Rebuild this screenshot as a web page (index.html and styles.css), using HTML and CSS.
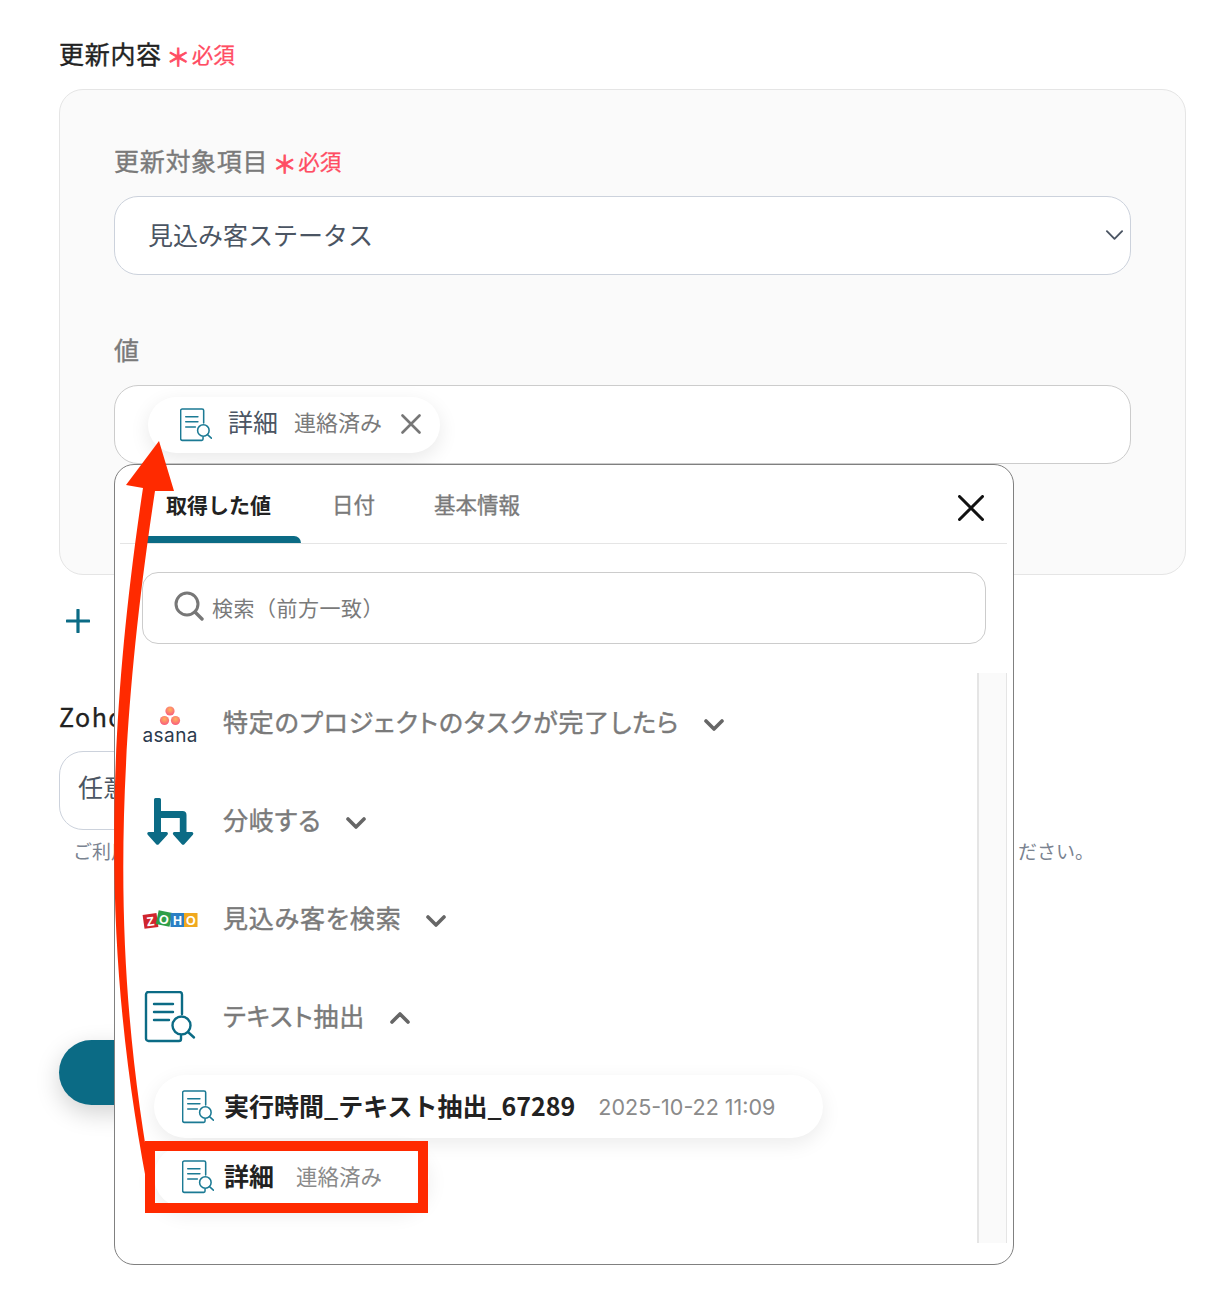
FILE: index.html
```html
<!DOCTYPE html>
<html lang="ja">
<head>
<meta charset="utf-8">
<title>更新内容</title>
<link rel="stylesheet" href="styles.css">
</head>
<body>
<svg class="defs" width="0" height="0" aria-hidden="true">
  <symbol id="doc" viewBox="0 0 50 52">
    <g fill="none" stroke="currentColor" stroke-width="2.4" stroke-linecap="round">
      <path d="M37 23V3.500a2.500 2.500 0 0 0-2.500-2.500H3.500A2.500 2.500 0 0 0 1 3.500v44A2.500 2.500 0 0 0 3.500 50H34a2 2 0 0 0 2-2v-3"/>
      <path d="M9 13h19M9 21h19M9 29h15"/>
      <circle cx="36.500" cy="34.500" r="9"/>
      <path d="M43 41l6 5.500"/>
    </g>
  </symbol>
  <symbol id="chev" viewBox="0 0 20 12">
    <path d="M2 2l8 8 8-8" fill="none" stroke="currentColor" stroke-width="3.600" stroke-linecap="round" stroke-linejoin="round"/>
  </symbol>
</svg>

<div class="page">
  <div class="label dark"><span class="label-text">更新内容</span><span class="req"><span class="ast">＊</span>必須</span></div>
  <section class="panel">
    <div class="label muted"><span class="label-text">更新対象項目</span><span class="req"><span class="ast">＊</span>必須</span></div>
    <div class="field select"><span class="field-text">見込み客ステータス</span>
      <svg class="select-chev" viewBox="0 0 20 12"><path d="M2 2l8 8 8-8" fill="none" stroke="currentColor" stroke-width="2" stroke-linecap="round" stroke-linejoin="round"/></svg>
    </div>
    <div class="label muted gap-label"><span class="label-text">値</span></div>
    <div class="field value">
      <div class="chip">
        <svg class="doc-sm"><use href="#doc"/></svg>
        <span class="chip-name">詳細</span>
        <span class="chip-val">連絡済み</span>
        <svg class="chip-x" viewBox="0 0 20 20"><path d="M1.500 1.500l17 17M18.500 1.500l-17 17" fill="none" stroke="currentColor" stroke-width="2.600" stroke-linecap="round"/></svg>
      </div>
    </div>
  </section>
  <svg class="plus" viewBox="0 0 24 24"><path d="M12 1v22M1 12h22" fill="none" stroke="currentColor" stroke-width="3.200" stroke-linecap="round"/></svg>
  <div class="label dark zoho-label"><span>Zoho</span></div>
  <div class="field short"><span class="field-text">任意の値</span></div>
  <div class="help"><span>ご利用の環境に対応するドメインを</span><span>選択してください。</span></div>
  <div class="primary">テスト</div>

  <div class="popover">
    <div class="tabs">
      <div class="tab active">取得した値</div>
      <div class="tab">日付</div>
      <div class="tab">基本情報</div>
      <svg class="close" viewBox="0 0 26 26"><path d="M1.500 1.500l23 23M24.500 1.500l-23 23" fill="none" stroke="currentColor" stroke-width="3" stroke-linecap="round"/></svg>
    </div>
    <div class="search">
      <svg class="search-ic" viewBox="0 0 30 30"><circle cx="13" cy="13" r="11" fill="none" stroke="currentColor" stroke-width="3"/><path d="M21 21l7 7" stroke="currentColor" stroke-width="3.400" stroke-linecap="round"/></svg>
      <span class="search-text">検索（前方一致）</span>
    </div>
    <div class="body">
      <div class="list">
        <div class="row">
          <svg class="logo" viewBox="0 0 56 56">
            <defs><radialGradient id="as" cx="50%" cy="35%" r="65%"><stop offset="0" stop-color="#ffb35a"/><stop offset="1" stop-color="#f9597f"/></radialGradient></defs>
            <circle cx="28" cy="16" r="4.600" fill="url(#as)"/>
            <circle cx="22.500" cy="25.500" r="4.600" fill="url(#as)"/>
            <circle cx="33.500" cy="25.500" r="4.600" fill="url(#as)"/>
            <text class="asana" x="0.500" y="47" textLength="55" lengthAdjust="spacing">asana</text>
          </svg>
          <span class="row-title">特定のプロジェクトのタスクが完了したら</span>
          <svg class="row-chev"><use href="#chev"/></svg>
        </div>
        <div class="row">
          <svg class="logo" viewBox="0 -1 56 50">
            <path fill="#0b6b85" d="M12 2.500a1.500 1.500 0 0 1 1.500-1.500h4A1.500 1.500 0 0 1 19 2.500V14h21.500a4 4 0 0 1 4 4v17h5.200c1.500 0 2.200 1.600 1.200 2.700L42.600 47a2 2 0 0 1-3 0l-8.300-9.300c-1-1.100-.3-2.700 1.200-2.700h5.300V21H19v14h5.300c1.500 0 2.200 1.600 1.200 2.700L17 47a2 2 0 0 1-3 0l-8.300-9.300C4.700 36.600 5.400 35 6.900 35H12z"/>
          </svg>
          <span class="row-title">分岐する</span>
          <svg class="row-chev"><use href="#chev"/></svg>
        </div>
        <div class="row">
          <svg class="logo" viewBox="0 -1 56 20">
            <g class="zoho">
              <rect x="1.500" y="4" width="14" height="14" fill="#d0252e" transform="rotate(-8 8 11)"/>
              <rect x="15" y="1.500" width="14" height="14" fill="#2f9e48" transform="rotate(12 22 9)"/>
              <rect x="28.500" y="3" width="14" height="14" fill="#2b7fc4"/>
              <rect x="42" y="3" width="13.500" height="14" fill="#f0a81e"/>
              <text x="8.500" y="15.800" transform="rotate(-8 8 11)">Z</text>
              <text x="22" y="13.800" transform="rotate(12 22 9)">O</text>
              <text x="35.500" y="15">H</text>
              <text x="48.800" y="15">O</text>
            </g>
          </svg>
          <span class="row-title">見込み客を検索</span>
          <svg class="row-chev"><use href="#chev"/></svg>
        </div>
        <div class="row">
          <svg class="logo doc-lg"><use href="#doc"/></svg>
          <span class="row-title">テキスト抽出</span>
          <svg class="row-chev up"><use href="#chev"/></svg>
        </div>
        <div class="pill">
          <svg class="doc-sm"><use href="#doc"/></svg>
          <span class="pill-name">実行時間_テキスト抽出_67289</span>
          <span class="pill-val num">2025-10-22 11:09</span>
        </div>
        <div class="pill">
          <svg class="doc-sm"><use href="#doc"/></svg>
          <span class="pill-name">詳細</span>
          <span class="pill-val">連絡済み</span>
        </div>
      </div>
      <div class="track"></div>
    </div>
  </div>

  <div class="mark"></div>
  <svg class="arrow" viewBox="0 0 1224 1306">
    <path fill="#ff2a00" d="M151 1205C112 1010 96 800 143 488L126 485L159 441L174 491L155 491C108 800 118 1000 154 1195Z"/>
  </svg>
</div>
</body>
</html>
```
FILE: styles.css
```css
* { box-sizing: border-box; }
html, body { margin: 0; background: #fff; }
body { font-family: "Noto Sans CJK JP", "Noto Sans", sans-serif; }
.defs { position: absolute; }

.page {
  position: relative;
  width: 1224px;
  height: 1306px;
  padding: 37px 38px 0 59px;
  overflow: hidden;
}

.label {
  display: flex;
  align-items: center;
  height: 36px;
  font-size: 25px;
  letter-spacing: .7px;
  white-space: nowrap;
}
.label-text { margin-top: -4px; -webkit-text-stroke: .4px currentColor; }
.dark { color: #222; }
.muted { color: #7a7a7a; }
.req {
  display: inline-flex;
  align-items: center;
  margin-left: 3px;
  margin-top: -4px;
  color: #ff4d63;
  font-size: 21.500px;
  letter-spacing: 0;
  -webkit-text-stroke: .25px currentColor;
}
.ast { width: 27px; text-align: center; font-size: 24px; margin-top: 4px; -webkit-text-stroke: .9px currentColor; }

.panel {
  margin-top: 16px;
  height: 486px;
  padding: 54px 54px 0 54px;
  background: #fafafa;
  border: 1px solid #e5e5e5;
  border-radius: 24px;
}
.gap-label { margin-top: 58px; }

.field {
  display: flex;
  align-items: center;
  height: 79px;
  margin-top: 16px;
  background: #fff;
  border: 1px solid #ccd2dc;
  border-radius: 24px;
  font-size: 25px;
  color: #4b5563;
}
.field-text { margin-top: -4px; }
.short .field-text { margin-top: -9px; }
.select { position: relative; padding-left: 33px; }
.select-chev { position: absolute; right: 6px; top: 32px; width: 19px; height: 12px; color: #4b5563; }
.value { padding-left: 33px; border-color: #ccc; }
.short { width: 640px; padding-left: 18px; }

.chip {
  display: flex;
  align-items: center;
  width: 292px;
  height: 56px;
  padding-left: 32px;
  background: #fff;
  border-radius: 28px;
  box-shadow: 0 6px 20px rgba(0, 0, 0, .09);
}
.doc-sm { width: 32px; height: 34px; flex: none; color: #1b7a94; }
.chip-name { margin: -8px 0 0 16px; font-size: 25px; color: #4b5563; }
.chip-val { margin: -8px 0 0 16px; font-size: 22px; color: #7a7a7a; }
.chip-x { margin: -2px 0 0 19px; width: 20px; height: 20px; color: #777; }

.plus { display: block; width: 24px; height: 24px; margin: 34px 0 0 7px; color: #0b6b85; }
.zoho-label { margin-top: 66px; padding-bottom: 2px; letter-spacing: 1.500px; -webkit-text-stroke: .3px currentColor; }

.help {
  display: flex;
  justify-content: space-between;
  width: 1035px;
  margin-top: 7px;
  padding-left: 14px;
  font-size: 19px;
  line-height: 28px;
  color: #7a8390;
}
.primary {
  display: flex;
  align-items: center;
  justify-content: center;
  width: 320px;
  height: 65px;
  margin-top: 175px;
  background: #0b6b85;
  border-radius: 33px;
  color: #fff;
  font-size: 22px;
  box-shadow: 0 8px 24px rgba(0, 0, 0, .18);
}

.popover {
  position: absolute;
  left: 114px;
  top: 464px;
  width: 900px;
  height: 801px;
  display: flex;
  flex-direction: column;
  background: #fff;
  border: 1px solid #808080;
  border-radius: 20px;
}
.tabs {
  display: flex;
  align-items: center;
  height: 79px;
  margin: 0 6px 0 5px;
  padding-left: 16px;
  border-bottom: 1px solid #e5e5e5;
}
.tab {
  position: relative;
  height: 100%;
  padding: 24px 28px 0 31px;
  font-size: 21.500px;
  line-height: 30px;
  color: #7a7a7a;
  -webkit-text-stroke: .35px currentColor;
  white-space: nowrap;
}
.tab.active {
  padding: 24px 30px 0;
  font-size: 21px;
  color: #222;
  font-weight: 700;
  -webkit-text-stroke: 0;
}
.tab.active::after {
  content: "";
  position: absolute;
  left: 0;
  right: 0;
  bottom: 0;
  height: 7px;
  background: #0b6b85;
  border-radius: 8px 8px 0 0;
}
.close { width: 26px; height: 26px; margin: 7px 23px 0 auto; color: #111; }

.search {
  display: flex;
  align-items: center;
  height: 72px;
  margin: 28px 27px 0;
  padding-left: 31px;
  border: 1px solid #ccc;
  border-radius: 16px;
  font-size: 21px;
  color: #7a7a7a;
}
.search-text { margin-top: -2px; letter-spacing: .5px; }
.search-ic { width: 30px; height: 30px; margin-right: 8px; margin-top: -4px; color: #777; }

.body { display: flex; height: 570px; margin-top: 29px; }
.list { flex: 1; padding: 1px 0 0 27px; }
.track {
  width: 30px;
  margin-right: 6px;
  background: #fafafa;
  border-left: 2px solid #e5e5e5;
  border-right: 1px solid #e5e5e5;
}

.row { display: flex; align-items: center; height: 98px; }
.logo { width: 56px; height: 56px; flex: none; }
.doc-lg { height: 52px; color: #0b6b85; }
.row-title {
  margin: -4px 0 0 25px;
  font-size: 25px;
  font-feature-settings: "palt";
  letter-spacing: .85px;
  -webkit-text-stroke: .45px currentColor;
  color: #7a7a7a;
  white-space: nowrap;
}
.row-chev { width: 20px; height: 12px; margin-left: 25px; margin-top: 4px; color: #666; }
.row-chev.up { transform: rotate(180deg); margin-top: 2px; }
.asana { font-family: "Inter", sans-serif; font-size: 19px; fill: #2b3a4d; }
.zoho text { font-family: "Liberation Sans", sans-serif; font-size: 12.500px; font-weight: 700; fill: #fff; text-anchor: middle; }

.pill {
  display: flex;
  align-items: center;
  width: fit-content;
  height: 63px;
  margin: 9px 0 -2px 12px;
  padding: 0 47px 0 28px;
  background: #fff;
  border-radius: 32px;
  box-shadow: 0 6px 20px rgba(0, 0, 0, .08);
  white-space: nowrap;
}
.pill-name { margin: -4px 0 0 10px; font-size: 25px; font-weight: 700; color: #222; }
.pill-val { margin: -2px 0 0 22px; font-size: 21.500px; color: #8a8a8a; }
.num { font-family: "Inter", "Noto Sans", sans-serif; margin: 0 1px 0 23px; }

.mark {
  position: absolute;
  left: 145px;
  top: 1141px;
  width: 283px;
  height: 72px;
  border: 10px solid #ff2a00;
}
.arrow { position: absolute; left: 0; top: 0; width: 1224px; height: 1306px; pointer-events: none; }
```
